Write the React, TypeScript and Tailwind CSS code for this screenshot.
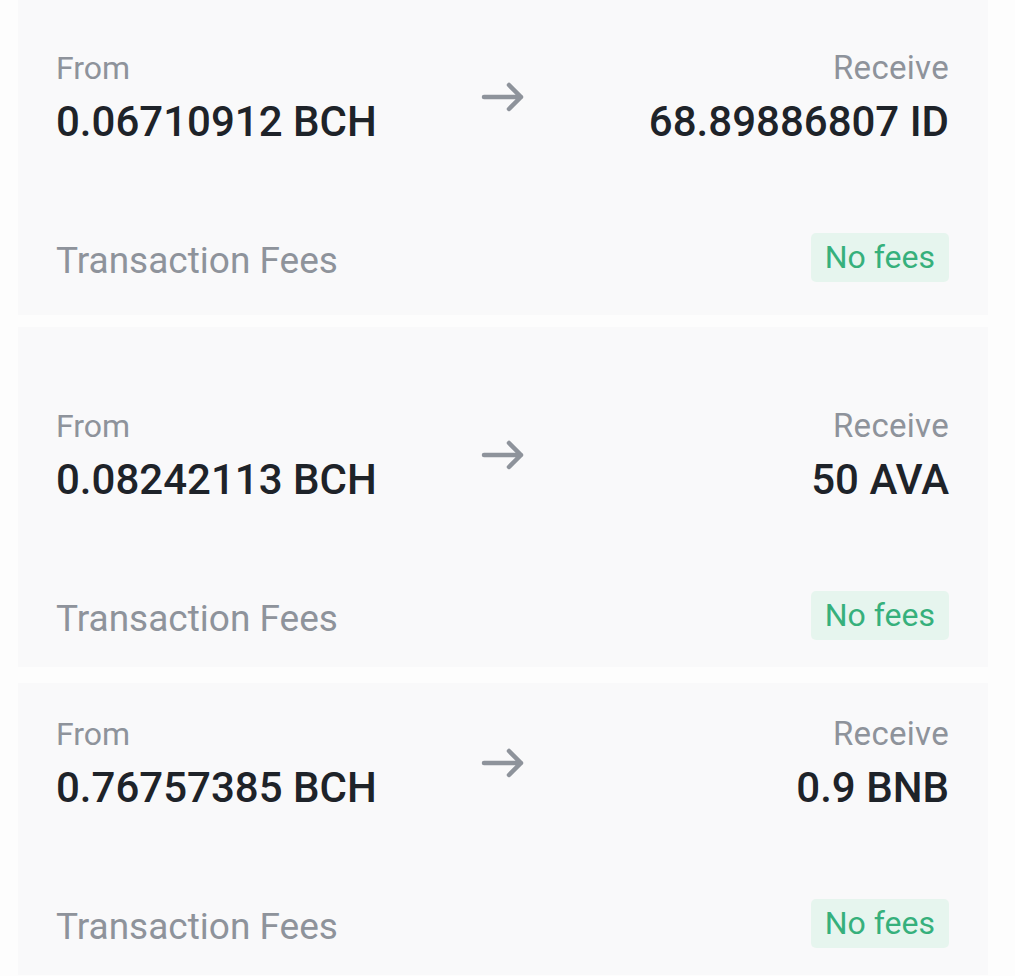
import clsx from "clsx";

type Swap = {
  from: string;
  receive: string;
  pad: string;
};

const swaps: Swap[] = [
  { from: "0.06710912 BCH", receive: "68.89886807 ID", pad: "pt-[50px] pb-[33px]" },
  { from: "0.08242113 BCH", receive: "50 AVA", pad: "pt-[81px] pb-[27px]" },
  { from: "0.76757385 BCH", receive: "0.9 BNB", pad: "pt-[33px] pb-[27px]" },
];

function Arrow() {
  return (
    <svg width="44" height="32" viewBox="0 0 44 32" fill="none" className="-mt-[4px]">
      <path
        d="M3 16H40M28 4L40 16L28 28"
        stroke="#8e939b"
        strokeWidth="4.5"
        strokeLinecap="round"
        strokeLinejoin="round"
      />
    </svg>
  );
}

function SwapCard({ swap, className }: { swap: Swap; className?: string }) {
  return (
    <section className={clsx("bg-[#f9f9fa] pl-[38px] pr-[39px]", swap.pad, className)}>
      <div className="grid grid-cols-[1fr_auto_1fr] items-center">
        <div>
          <p className="text-[32px] leading-[36px] text-[#8e939b]">From</p>
          <p className="mt-[11px] text-[42px] font-medium leading-[50px] text-[#1e2329]">{swap.from}</p>
        </div>
        <Arrow />
        <div className="text-right">
          <p className="text-[33px] tracking-[0.3px] leading-[36px] text-[#8e939b]">Receive</p>
          <p className="mt-[11px] text-[42px] font-medium leading-[50px] text-[#1e2329]">{swap.receive}</p>
        </div>
      </div>
      <div className="mt-[86px] flex h-[49px] items-center justify-between">
        <span className="pt-[6px] text-[37px] leading-[43px] text-[#8e939b]">Transaction Fees</span>
        <span className="rounded-[5px] bg-[#e6f5ee] px-[14px] text-[32px] leading-[49px] text-[#36b07c]">
          No fees
        </span>
      </div>
    </section>
  );
}

export default function App() {
  return (
    <div className="h-[976px] overflow-hidden bg-[#fdfdfd] px-[18px] font-['Roboto',sans-serif] antialiased">
      <div className="w-[970px]">
        <SwapCard swap={swaps[0]} />
        <SwapCard swap={swaps[1]} className="mt-[12px]" />
        <SwapCard swap={swaps[2]} className="mt-[16px]" />
      </div>
    </div>
  );
}
